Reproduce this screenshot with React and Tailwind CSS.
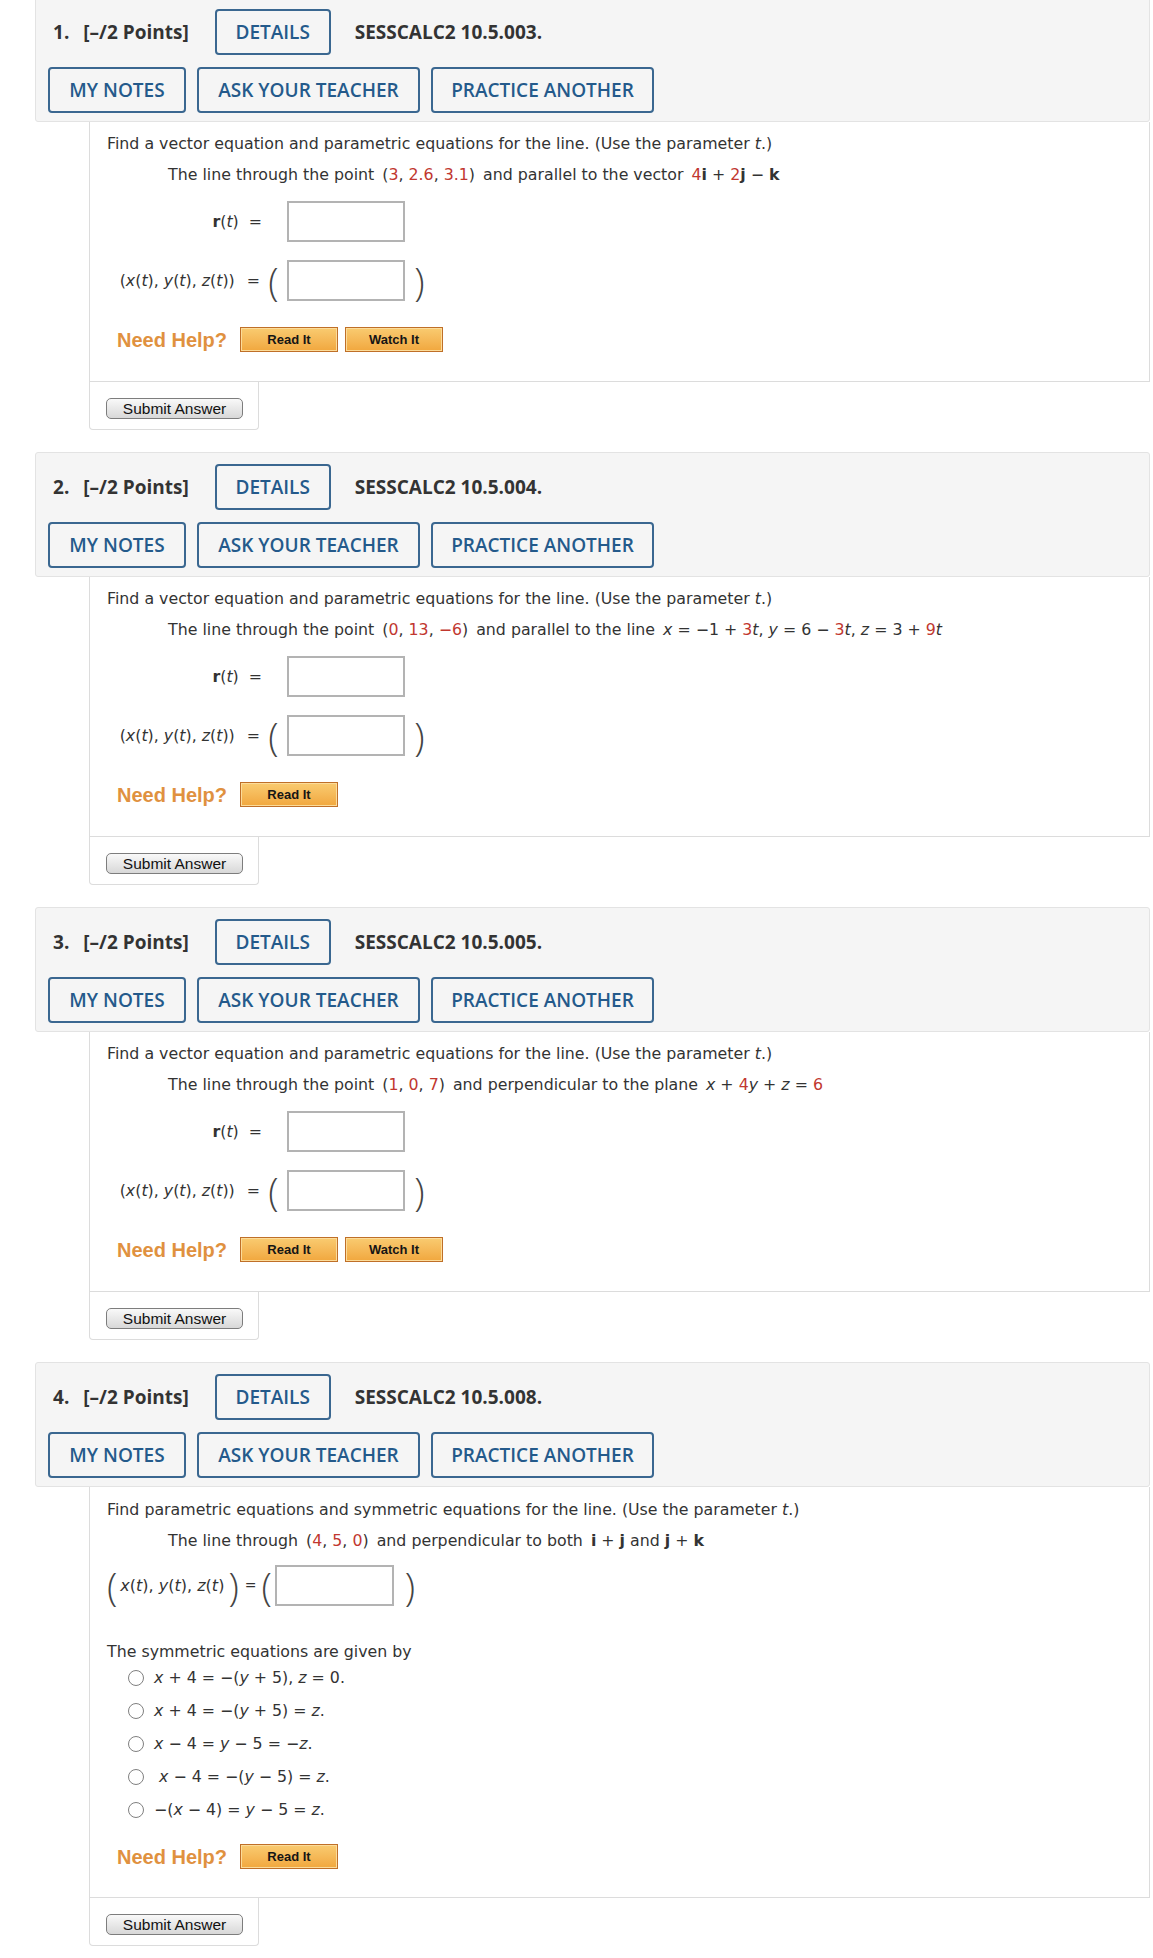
import React from "react";

const body = "font-['DejaVu_Sans',Verdana,sans-serif]";
const paren = "font-['Open_Sans',sans-serif] font-light text-[38px] leading-none";

function R({ children }) {
  return <span className="text-[#c1372f]">{children}</span>;
}

function OutlineBtn({ children, w }) {
  return (
    <span
      className={`flex items-center justify-center h-[46px] border-2 border-[#3a6790] rounded-[4px] text-[19px] font-semibold text-[#245a8b] ${w}`}
    >
      {children}
    </span>
  );
}

function Header({ n, code }) {
  return (
    <div className="h-[125px] bg-[#f5f5f5] border border-[#e3e3e3] rounded-[3px] pt-[11px] pl-[12px] font-['Open_Sans',sans-serif]">
      <div className="flex items-center h-[46px]">
        <span className="ml-[5px] text-[19px] font-bold text-[#333]">{n}.</span>
        <span className="ml-[14px] text-[19px] font-bold text-[#333]">[–/2 Points]</span>
        <span className="ml-[26px]">
          <OutlineBtn w="w-[116px]">DETAILS</OutlineBtn>
        </span>
        <span className="ml-[24px] text-[19px] font-bold text-[#333]">SESSCALC2 {code}.</span>
      </div>
      <div className="flex gap-[11px] mt-[12px]">
        <OutlineBtn w="w-[138px]">MY NOTES</OutlineBtn>
        <OutlineBtn w="w-[223px]">ASK YOUR TEACHER</OutlineBtn>
        <OutlineBtn w="w-[223px]">PRACTICE ANOTHER</OutlineBtn>
      </div>
    </div>
  );
}

function HelpBtn({ children }) {
  return (
    <span className="flex items-center justify-center w-[98px] h-[25px] border border-[#bf6f28] bg-linear-to-b from-[#f9cb70] to-[#f1a73d] shadow-[inset_0_0_0_1px_#fcdc9a] text-[13px] font-bold text-[#151515]">
      {children}
    </span>
  );
}

function NeedHelp({ watch, className }) {
  return (
    <div className={`flex items-center h-[25px] pl-[10px] font-['Liberation_Sans',Arial,sans-serif] ${className}`}>
      <span className="text-[20px] font-bold text-[#e0913f] mr-[13px]">Need Help?</span>
      <HelpBtn>Read It</HelpBtn>
      {watch && (
        <span className="ml-[7px]">
          <HelpBtn>Watch It</HelpBtn>
        </span>
      )}
    </div>
  );
}

function Box({ w = "w-[118px]" }) {
  return <span className={`block h-[41px] border-2 border-[#b3b3b3] bg-white ${w}`} />;
}

function Submit() {
  return (
    <div className="ml-[54px] w-[170px] h-[48px] border-x border-b border-[#dcdcdc] rounded-b-[4px] pt-[16px] pl-[16px]">
      <span className="flex items-center justify-center w-[137px] h-[21px] rounded-[5px] border border-[#7d7d7d] bg-linear-to-b from-[#f9f9f9] to-[#d8d8d8] text-[15.5px] text-[#111] font-['Liberation_Sans',Arial,sans-serif]">
        Submit Answer
      </span>
    </div>
  );
}

function VectorQuestion({ n, code, line, watch }) {
  return (
    <div className="mb-[22px]">
      <Header n={n} code={code} />
      <div className={`ml-[54px] h-[260px] border-x border-b border-[#dcdcdc] pl-[17px] pt-[12px] text-[15.8px] text-[#333] ${body}`}>
        <div className="leading-[20px]">
          Find a vector equation and parametric equations for the line. (Use the parameter <i>t</i>.)
        </div>
        <div className="leading-[20px] mt-[11px] pl-[61px]">{line}</div>
        <div className="flex items-center h-[41px] mt-[16px] ml-[6px]">
          <span className="w-[149px] text-right">
            <b>r</b>(<i>t</i>)<span className="ml-[10px]">=</span>
          </span>
          <span className="w-[25px]" />
          <Box />
        </div>
        <div className="flex items-center h-[41px] mt-[18px] ml-[6px]">
          <span className="w-[147px] text-right">
            (<i>x</i>(<i>t</i>), <i>y</i>(<i>t</i>), <i>z</i>(<i>t</i>))<span className="ml-[12px]">=</span>
          </span>
          <span className={`w-[27px] text-center text-[#444] ${paren}`}>(</span>
          <Box />
          <span className={`w-[29px] text-center text-[#444] ${paren}`}>)</span>
        </div>
        <NeedHelp watch={watch} className="mt-[26px]" />
      </div>
      <Submit />
    </div>
  );
}

function Radio({ children, extra }) {
  return (
    <div className="flex items-center h-[33px]">
      <span className="ml-[21px] w-[16px] h-[16px] rounded-full border-[1.5px] border-[#808080] bg-white" />
      <span className={extra ? "ml-[15px]" : "ml-[10px]"}>{children}</span>
    </div>
  );
}

function SymmetricQuestion() {
  return (
    <div>
      <Header n={4} code="10.5.008" />
      <div className={`ml-[54px] h-[411px] border-x border-b border-[#dcdcdc] pl-[17px] pt-[13px] text-[15.8px] text-[#333] ${body}`}>
        <div className="leading-[20px]">
          Find parametric equations and symmetric equations for the line. (Use the parameter <i>t</i>.)
        </div>
        <div className="leading-[20px] mt-[11px] pl-[61px]">
          The line through
          <span className="ml-[8px] mr-[8px]">
            (<R>4</R>, <R>5</R>, <R>0</R>)
          </span>
          and perpendicular to both <b className="ml-[3px]">i</b> + <b>j</b> and <b>j</b> + <b>k</b>
        </div>
        <div className="flex items-center h-[41px] mt-[14px]">
          <span className={`text-[#444] ${paren}`}>(</span>
          <span className="text-[16px] ml-[3px] mr-[4px]">
            <i>x</i>(<i>t</i>), <i>y</i>(<i>t</i>), <i>z</i>(<i>t</i>)
          </span>
          <span className={`text-[#444] ${paren}`}>)</span>
          <span className="ml-[6px] text-[14px]">=</span>
          <span className={`ml-[5px] text-[#444] ${paren}`}>(</span>
          <span className="ml-[3px]">
            <Box w="w-[119px]" />
          </span>
          <span className={`ml-[11px] text-[#444] ${paren}`}>)</span>
        </div>
        <div className="leading-[20px] mt-[36px]">The symmetric equations are given by</div>
        <div className="-mt-[1px]">
          <Radio>
            <i>x</i> + 4 = −(<i>y</i> + 5), <i>z</i> = 0.
          </Radio>
          <Radio>
            <i>x</i> + 4 = −(<i>y</i> + 5) = <i>z</i>.
          </Radio>
          <Radio>
            <i>x</i> − 4 = <i>y</i> − 5 = −<i>z</i>.
          </Radio>
          <Radio extra>
            <i>x</i> − 4 = −(<i>y</i> − 5) = <i>z</i>.
          </Radio>
          <Radio>
            −(<i>x</i> − 4) = <i>y</i> − 5 = <i>z</i>.
          </Radio>
        </div>
        <NeedHelp className="mt-[18px]" />
      </div>
      <Submit />
    </div>
  );
}

export default function App() {
  return (
    <div className="min-h-[1958px] bg-white">
      <div className="w-[1115px] ml-[35px] -mt-[3px]">
        <VectorQuestion
          n={1}
          code="10.5.003"
          watch
          line={
            <>
              The line through the point
              <span className="ml-[8px] mr-[8px]">
                (<R>3</R>, <R>2.6</R>, <R>3.1</R>)
              </span>
              and parallel to the vector
              <span className="ml-[8px]">
                <R>4</R>
                <b>i</b> + <R>2</R>
                <b>j</b> − <b>k</b>
              </span>
            </>
          }
        />
        <VectorQuestion
          n={2}
          code="10.5.004"
          line={
            <>
              The line through the point
              <span className="ml-[8px] mr-[8px]">
                (<R>0</R>, <R>13</R>, <R>−6</R>)
              </span>
              and parallel to the line
              <span className="ml-[8px]">
                <i>x</i> = −1 + <R>3</R>
                <i>t</i>, <i>y</i> = 6 − <R>3</R>
                <i>t</i>, <i>z</i> = 3 + <R>9</R>
                <i>t</i>
              </span>
            </>
          }
        />
        <VectorQuestion
          n={3}
          code="10.5.005"
          watch
          line={
            <>
              The line through the point
              <span className="ml-[8px] mr-[8px]">
                (<R>1</R>, <R>0</R>, <R>7</R>)
              </span>
              and perpendicular to the plane
              <span className="ml-[8px]">
                <i>x</i> + <R>4</R>
                <i>y</i> + <i>z</i> = <R>6</R>
              </span>
            </>
          }
        />
        <SymmetricQuestion />
      </div>
    </div>
  );
}
